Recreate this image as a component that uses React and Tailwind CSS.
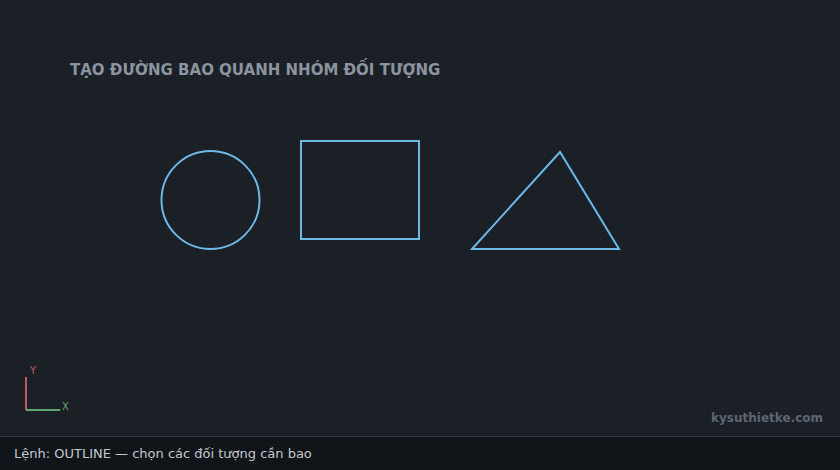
export default function App() {
  return (
    <div
      className="w-[840px] h-[470px] flex flex-col bg-[#1b1f26] overflow-hidden"
      style={{ fontFamily: '"DejaVu Sans", sans-serif' }}
    >
      {/* drawing canvas */}
      <div className="relative flex-1">
        <svg className="absolute inset-0" width="840" height="436">
          <defs>
            <pattern id="grid" width="40" height="40" patternUnits="userSpaceOnUse" x="-1" y="-1">
              <rect x="0" y="0" width="2" height="2" fill="#242933" />
            </pattern>
          </defs>
          <rect width="840" height="436" fill="url(#grid)" />
          <g fill="none" stroke="#6cb9e8" strokeWidth="2">
            <circle cx="210.5" cy="200" r="49" />
            <rect x="301" y="141" width="118" height="98" />
            <polygon points="560,152 472,249 619,249" strokeLinejoin="miter" />
          </g>
          {/* UCS axes */}
          <line x1="26" y1="377" x2="26" y2="410" stroke="#c05a5e" strokeWidth="2" />
          <line x1="26" y1="410" x2="60" y2="410" stroke="#5fa870" strokeWidth="2" />
          <text x="30" y="374" fill="#c05a5e" fontSize="10" fontFamily="DejaVu Sans, sans-serif">Y</text>
          <text x="62" y="410" fill="#5fa870" fontSize="10" fontFamily="DejaVu Sans, sans-serif">X</text>
        </svg>
        <div className="relative pt-[60px] pl-[70px] text-[15px] font-bold text-[#8b949f] leading-5">
          TẠO ĐƯỜNG BAO QUANH NHÓM ĐỐI TƯỢNG
        </div>
        <div className="absolute right-[17px] bottom-[10px] text-[12px] font-bold text-[#5d6572] leading-4">
          kysuthietke.com
        </div>
      </div>
      {/* command line */}
      <div className="h-[34px] shrink-0 border-t border-[#2f3640] bg-[#111419] flex items-center px-[14px] text-[13px] text-[#c2c8d0]">
        Lệnh: OUTLINE — chọn các đối tượng cần bao
      </div>
    </div>
  );
}
